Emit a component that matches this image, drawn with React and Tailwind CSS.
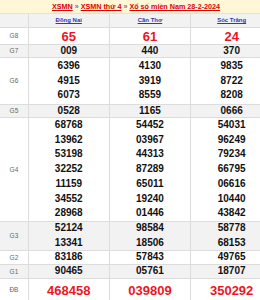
import React from "react";

const cols = ["Đồng Nai", "Cần Thơ", "Sóc Trăng"];

const rows = [
  { label: "G8", h: "h-[17px]", big: true, bg: "bg-white", vals: [["65"], ["61"], ["24"]] },
  { label: "G7", h: "h-[13px]", bg: "bg-[#f2f2f2]", vals: [["009"], ["440"], ["370"]] },
  {
    label: "G6",
    h: "h-[47px]",
    bg: "bg-white",
    vals: [
      ["6396", "4915", "6073"],
      ["4130", "3919", "8559"],
      ["9835", "8722", "8208"],
    ],
  },
  { label: "G5", h: "h-[13px]", bg: "bg-[#f2f2f2]", vals: [["0528"], ["1165"], ["0666"]] },
  {
    label: "G4",
    h: "h-[104px]",
    bg: "bg-white",
    vals: [
      ["68768", "13962", "53198", "32252", "11159", "34552", "28968"],
      ["54452", "03967", "44313", "87289", "65011", "19240", "01446"],
      ["54031", "96249", "79234", "66795", "06616", "10440", "43842"],
    ],
  },
  {
    label: "G3",
    h: "h-[29px]",
    bg: "bg-[#f2f2f2]",
    vals: [
      ["52124", "13341"],
      ["98584", "18506"],
      ["58778", "68153"],
    ],
  },
  { label: "G2", h: "h-[14px]", bg: "bg-white", vals: [["83186"], ["57843"], ["49765"]] },
  { label: "G1", h: "h-[14px]", bg: "bg-[#f2f2f2]", vals: [["90465"], ["05761"], ["18707"]] },
  { label: "ĐB", h: "h-[23px]", big: true, bg: "bg-white", vals: [["468458"], ["039809"], ["350292"]] },
];

const widths = ["w-[81px]", "w-[82px]", "w-[81px]"];

export default function App() {
  return (
    <div
      className="w-[260px] h-[300px] overflow-hidden bg-white"
      style={{ fontFamily: '"Liberation Sans", Arial, sans-serif' }}
    >
      <div className="w-[272px]">
        <div className="h-[13px] bg-[#fff7d6] flex items-center justify-center text-[7.2px] font-bold leading-none">
          <span className="text-[#e00000] underline">XSMN</span>
          <span className="text-[#777] mx-[2px]">»</span>
          <span className="text-[#e00000] underline">XSMN thứ 4</span>
          <span className="text-[#777] mx-[2px]">»</span>
          <span className="text-[#e00000] underline">Xổ số miền Nam 28-2-2024</span>
        </div>
        <div className="border-t border-[#e2e2e2]">
          <div className="flex h-[14px] bg-[#f2f2f2] border-b border-[#dcdcdc]">
            <div className="w-[29px] border-r border-[#dcdcdc]" />
            {cols.map((c, i) => (
              <div
                key={c}
                className={`${widths[i]} ${i < 2 ? "border-r border-[#dcdcdc]" : ""} flex items-center justify-center text-[6px] font-bold text-[#3535b5] underline`}
              >
                {c}
              </div>
            ))}
          </div>
          {rows.map((r) => (
            <div key={r.label} className={`flex ${r.h} ${r.bg} border-b border-[#dcdcdc]`}>
              <div className="w-[29px] border-r border-[#dcdcdc] flex items-center justify-center text-[6.5px] text-[#666]">
                {r.label}
              </div>
              {r.vals.map((v, i) => (
                <div
                  key={i}
                  className={`${widths[i]} ${i < 2 ? "border-r border-[#dcdcdc]" : ""} flex flex-col items-center justify-center font-bold ${
                    r.big ? "text-[13px] text-[#f0141e] leading-none" : "text-[10px] text-[#111] leading-[14.7px]"
                  }`}
                >
                  {v.map((n) => (
                    <div key={n}>{n}</div>
                  ))}
                </div>
              ))}
            </div>
          ))}
        </div>
      </div>
    </div>
  );
}
